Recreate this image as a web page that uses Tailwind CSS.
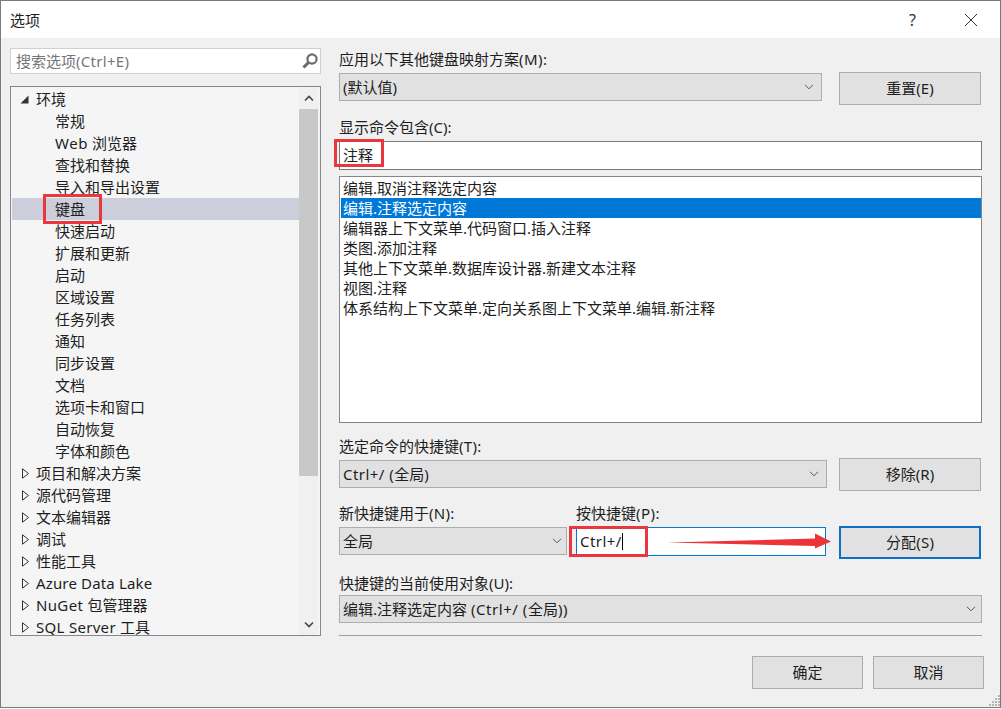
<!DOCTYPE html>
<html lang="zh">
<head>
<meta charset="utf-8">
<title>选项</title>
<script src="https://cdn.jsdelivr.net/npm/@tailwindcss/browser@4"></script>
</head>
<body class="bg-white">
<div class="relative w-[1001px] h-[708px] overflow-hidden border border-[#7a7a7a] bg-[#f0f0f0] text-[15px] text-[#1e1e1e] font-['Noto_Sans','Noto_Sans_CJK_SC',sans-serif]">
  <!-- title bar -->
  <div class="flex h-[37px] items-center justify-between bg-white pl-[9px] pr-[22px]">
    <span class="leading-[36px]">选项</span>
    <div class="flex items-center gap-[48px]">
      <span class="text-[16px] text-[#333]">?</span>
      <svg class="h-[14px] w-[14px]" viewBox="0 0 14 14" fill="none" stroke="#333" stroke-width="1"><path d="M1 1l12 12M13 1L1 13"/></svg>
    </div>
  </div>
  <div class="flex gap-[18px] pl-[9px] pt-[10px]">
    <!-- left column -->
    <div class="flex w-[311px] flex-col">
      <div class="flex h-[26px] items-center justify-between border border-[#d0d0d0] bg-white pl-[5px] pr-[1px] text-[#767676]">
        <span>搜索选项<span class="tracking-[0.3px]">(Ctrl+E)</span></span>
        <svg class="h-[18px] w-[18px]" viewBox="0 0 18 18" fill="none" stroke="#6b6b6b"><circle cx="11" cy="7" r="4.6" stroke-width="2.2"/><path d="M7.6 10.4L2.5 15.5" stroke-width="3"/></svg>
      </div>
      <div class="mt-[12px] flex h-[550px] overflow-hidden border border-[#828790] bg-[#f5f5f5] pl-[1px]">
        <div class="h-[548px] w-[287px] shrink-0 overflow-hidden pt-[1px]">
          <div class="flex h-[22px] items-center"><svg class="ml-[8px] mr-[7px] h-[9px] w-[9px]" viewBox="0 0 9 9" fill="#333"><path d="M8.5 0.5V8.5H0.5Z"/></svg><span>环境</span></div>
          <div class="flex h-[22px] items-center pl-[43px]">常规</div>
          <div class="flex h-[22px] items-center pl-[43px]"><span class="tracking-[0.6px]">Web </span>&nbsp;浏览器</div>
          <div class="flex h-[22px] items-center pl-[43px]">查找和替换</div>
          <div class="flex h-[22px] items-center pl-[43px]">导入和导出设置</div>
          <div class="flex h-[22px] items-center bg-[#cccedb] pl-[43px]">键盘</div>
          <div class="flex h-[22px] items-center pl-[43px]">快速启动</div>
          <div class="flex h-[22px] items-center pl-[43px]">扩展和更新</div>
          <div class="flex h-[22px] items-center pl-[43px]">启动</div>
          <div class="flex h-[22px] items-center pl-[43px]">区域设置</div>
          <div class="flex h-[22px] items-center pl-[43px]">任务列表</div>
          <div class="flex h-[22px] items-center pl-[43px]">通知</div>
          <div class="flex h-[22px] items-center pl-[43px]">同步设置</div>
          <div class="flex h-[22px] items-center pl-[43px]">文档</div>
          <div class="flex h-[22px] items-center pl-[43px]">选项卡和窗口</div>
          <div class="flex h-[22px] items-center pl-[43px]">自动恢复</div>
          <div class="flex h-[22px] items-center pl-[43px]">字体和颜色</div>
          <div class="flex h-[22px] items-center"><svg class="ml-[9px] mr-[6px] h-[11px] w-[9px]" viewBox="0 0 9 11" fill="none" stroke="#333"><path d="M1.5 0.8L7.5 5.5L1.5 10.2Z"/></svg><span>项目和解决方案</span></div>
          <div class="flex h-[22px] items-center"><svg class="ml-[9px] mr-[6px] h-[11px] w-[9px]" viewBox="0 0 9 11" fill="none" stroke="#333"><path d="M1.5 0.8L7.5 5.5L1.5 10.2Z"/></svg><span>源代码管理</span></div>
          <div class="flex h-[22px] items-center"><svg class="ml-[9px] mr-[6px] h-[11px] w-[9px]" viewBox="0 0 9 11" fill="none" stroke="#333"><path d="M1.5 0.8L7.5 5.5L1.5 10.2Z"/></svg><span>文本编辑器</span></div>
          <div class="flex h-[22px] items-center"><svg class="ml-[9px] mr-[6px] h-[11px] w-[9px]" viewBox="0 0 9 11" fill="none" stroke="#333"><path d="M1.5 0.8L7.5 5.5L1.5 10.2Z"/></svg><span>调试</span></div>
          <div class="flex h-[22px] items-center"><svg class="ml-[9px] mr-[6px] h-[11px] w-[9px]" viewBox="0 0 9 11" fill="none" stroke="#333"><path d="M1.5 0.8L7.5 5.5L1.5 10.2Z"/></svg><span>性能工具</span></div>
          <div class="flex h-[22px] items-center"><svg class="ml-[9px] mr-[6px] h-[11px] w-[9px]" viewBox="0 0 9 11" fill="none" stroke="#333"><path d="M1.5 0.8L7.5 5.5L1.5 10.2Z"/></svg><span class="tracking-[0.15px]">Azure Data Lake</span></div>
          <div class="flex h-[22px] items-center"><svg class="ml-[9px] mr-[6px] h-[11px] w-[9px]" viewBox="0 0 9 11" fill="none" stroke="#333"><path d="M1.5 0.8L7.5 5.5L1.5 10.2Z"/></svg><span><span class="tracking-[0.35px]">NuGet </span>包管理器</span></div>
          <div class="flex h-[22px] items-center"><svg class="ml-[9px] mr-[6px] h-[11px] w-[9px]" viewBox="0 0 9 11" fill="none" stroke="#333"><path d="M1.5 0.8L7.5 5.5L1.5 10.2Z"/></svg><span><span class="tracking-[0.3px]">SQL Server </span>工具</span></div>
        </div>
        <!-- scrollbar -->
        <div class="flex h-[548px] w-[19px] shrink-0 flex-col bg-[#f0f0f0]">
          <div class="flex h-[22px] items-center justify-center"><svg class="h-[7px] w-[10px]" viewBox="0 0 10 7" fill="none" stroke="#444" stroke-width="1.6"><path d="M1 5.5L5 1.5L9 5.5"/></svg></div>
          <div class="h-[367px] bg-[#c8c8c8]"></div>
          <div class="flex-1"></div>
          <div class="flex h-[22px] items-center justify-center"><svg class="h-[7px] w-[10px]" viewBox="0 0 10 7" fill="none" stroke="#444" stroke-width="1.6"><path d="M1 1.5L5 5.5L9 1.5"/></svg></div>
        </div>
      </div>
    </div>
    <!-- right column -->
    <div class="flex w-[643px] flex-col">
      <div class="h-[22px] leading-[22px]">应用以下其他键盘映射方案<span class="tracking-[0.5px]">(M):</span></div>
      <div class="mt-[2px] flex items-start justify-between pr-[1px]">
        <div class="mt-[1px] flex h-[28px] w-[483px] items-center justify-between border border-[#adadad] bg-[#e1e1e1] pl-[3px] pr-[7px]">
          <span>(默认值)</span>
          <svg class="h-[6px] w-[10px]" viewBox="0 0 10 6" fill="none" stroke="#555"><path d="M1 0.8L5 4.8L9 0.8"/></svg>
        </div>
        <div class="flex h-[33px] w-[142px] items-center justify-center border border-[#adadad] bg-[#e1e1e1]">重置(E)</div>
      </div>
      <div class="mt-[11px] h-[22px] leading-[22px]">显示命令包含(C):</div>
      <div class="mt-[3px] flex h-[29px] items-center border border-[#7a7a7a] bg-white pl-[3px]">注释</div>
      <div class="mt-[6px] h-[247px] border border-[#828790] bg-white pt-[1px] pl-[1px]">
        <div class="flex h-[20px] items-center pl-[2px]">编辑.取消注释选定内容</div>
        <div class="flex h-[20px] items-center bg-[#0078d7] pl-[2px] text-white">编辑.注释选定内容</div>
        <div class="flex h-[20px] items-center pl-[2px]">编辑器上下文菜单.代码窗口.插入注释</div>
        <div class="flex h-[20px] items-center pl-[2px]">类图.添加注释</div>
        <div class="flex h-[20px] items-center pl-[2px]">其他上下文菜单.数据库设计器.新建文本注释</div>
        <div class="flex h-[20px] items-center pl-[2px]">视图.注释</div>
        <div class="flex h-[20px] items-center pl-[2px]">体系结构上下文菜单.定向关系图上下文菜单.编辑.新注释</div>
      </div>
      <div class="mt-[12px] h-[22px] leading-[22px]">选定命令的快捷键<span class="tracking-[0.3px]">(T):</span></div>
      <div class="mt-[1px] flex items-start justify-between pr-[1px]">
        <div class="mt-[2px] flex h-[28px] w-[488px] items-center justify-between border border-[#adadad] bg-[#e1e1e1] pl-[3px] pr-[7px]">
          <span><span class="tracking-[0.45px]">Ctrl+/ (</span>全局<span>)</span></span>
          <svg class="h-[6px] w-[10px]" viewBox="0 0 10 6" fill="none" stroke="#555"><path d="M1 0.8L5 4.8L9 0.8"/></svg>
        </div>
        <div class="flex h-[33px] w-[142px] items-center justify-center border border-[#adadad] bg-[#e1e1e1]">移除(R)</div>
      </div>
      <div class="mt-[11px] flex h-[22px] leading-[22px]">
        <span class="w-[237px]">新快捷键用于<span class="tracking-[0.3px]">(N):</span></span>
        <span>按快捷键<span class="tracking-[0.5px]">(P):</span></span>
      </div>
      <div class="mt-[2px] flex items-start pr-[1px]">
        <div class="mt-[1px] flex h-[28px] w-[228px] items-center justify-between border border-[#adadad] bg-[#e1e1e1] pl-[3px] pr-[4px]">
          <span>全局</span>
          <svg class="h-[6px] w-[10px]" viewBox="0 0 10 6" fill="none" stroke="#555"><path d="M1 0.8L5 4.8L9 0.8"/></svg>
        </div>
        <div class="ml-[9px] mt-[1px] flex h-[29px] w-[250px] items-center border border-[#0078d7] bg-white pl-[3px]">
          <span class="tracking-[0.45px]">Ctrl+/</span><span class="h-[17px] w-[1px] bg-black"></span>
        </div>
        <div class="ml-auto flex h-[33px] w-[142px] items-center justify-center border-2 border-[#0f6fc6] bg-[#e1e1e1] tracking-[0.2px]">分配(S)</div>
      </div>
      <div class="mt-[13px] h-[22px] leading-[22px]">快捷键的当前使用对象(U):</div>
      <div class="mt-[1px] flex h-[28px] items-center justify-between border border-[#adadad] bg-[#e1e1e1] pl-[3px] pr-[5px]">
        <span>编辑.注释选定内容 <span class="tracking-[0.55px]">(Ctrl+/ (</span>全局<span class="tracking-[0.5px]">))</span></span>
        <svg class="h-[6px] w-[10px]" viewBox="0 0 10 6" fill="none" stroke="#555"><path d="M1 0.8L5 4.8L9 0.8"/></svg>
      </div>
      <div class="mt-[12px] h-[1px] bg-[#a0a0a0]"></div>
      <div class="mt-[20px] -mr-[2px] flex justify-end gap-[10px]">
        <div class="flex h-[33px] w-[111px] items-center justify-center border border-[#adadad] bg-[#e1e1e1]">确定</div>
        <div class="flex h-[33px] w-[111px] items-center justify-center border border-[#adadad] bg-[#e1e1e1]">取消</div>
      </div>
    </div>
  </div>
  <!-- annotations over the dialog -->
  <div class="absolute left-[42px] top-[193px] h-[30px] w-[59px] border-[3px] border-[#e8383d]"></div>
  <div class="absolute left-[333px] top-[138px] h-[28px] w-[50px] border-[3px] border-[#e8383d]"></div>
  <div class="absolute left-[568px] top-[525px] h-[31px] w-[79px] border-[3px] border-[#e8383d]"></div>
  <svg class="absolute left-[666px] top-[531px] h-[18px] w-[165px]" viewBox="0 0 165 18" fill="#ec3337"><path d="M0 10.5L148 6.5L148 1.5L164 9.5L148 16.5L148 14Z"/></svg>
  <svg class="absolute left-[988px] top-[694px] h-[12px] w-[12px]" viewBox="0 0 12 12" fill="#b5b5b5"><rect x="9" y="0" width="2" height="2"/><rect x="6" y="3" width="2" height="2"/><rect x="9" y="3" width="2" height="2"/><rect x="3" y="6" width="2" height="2"/><rect x="6" y="6" width="2" height="2"/><rect x="9" y="6" width="2" height="2"/><rect x="0" y="9" width="2" height="2"/><rect x="3" y="9" width="2" height="2"/><rect x="6" y="9" width="2" height="2"/><rect x="9" y="9" width="2" height="2"/></svg>
</div>
</body>
</html>
